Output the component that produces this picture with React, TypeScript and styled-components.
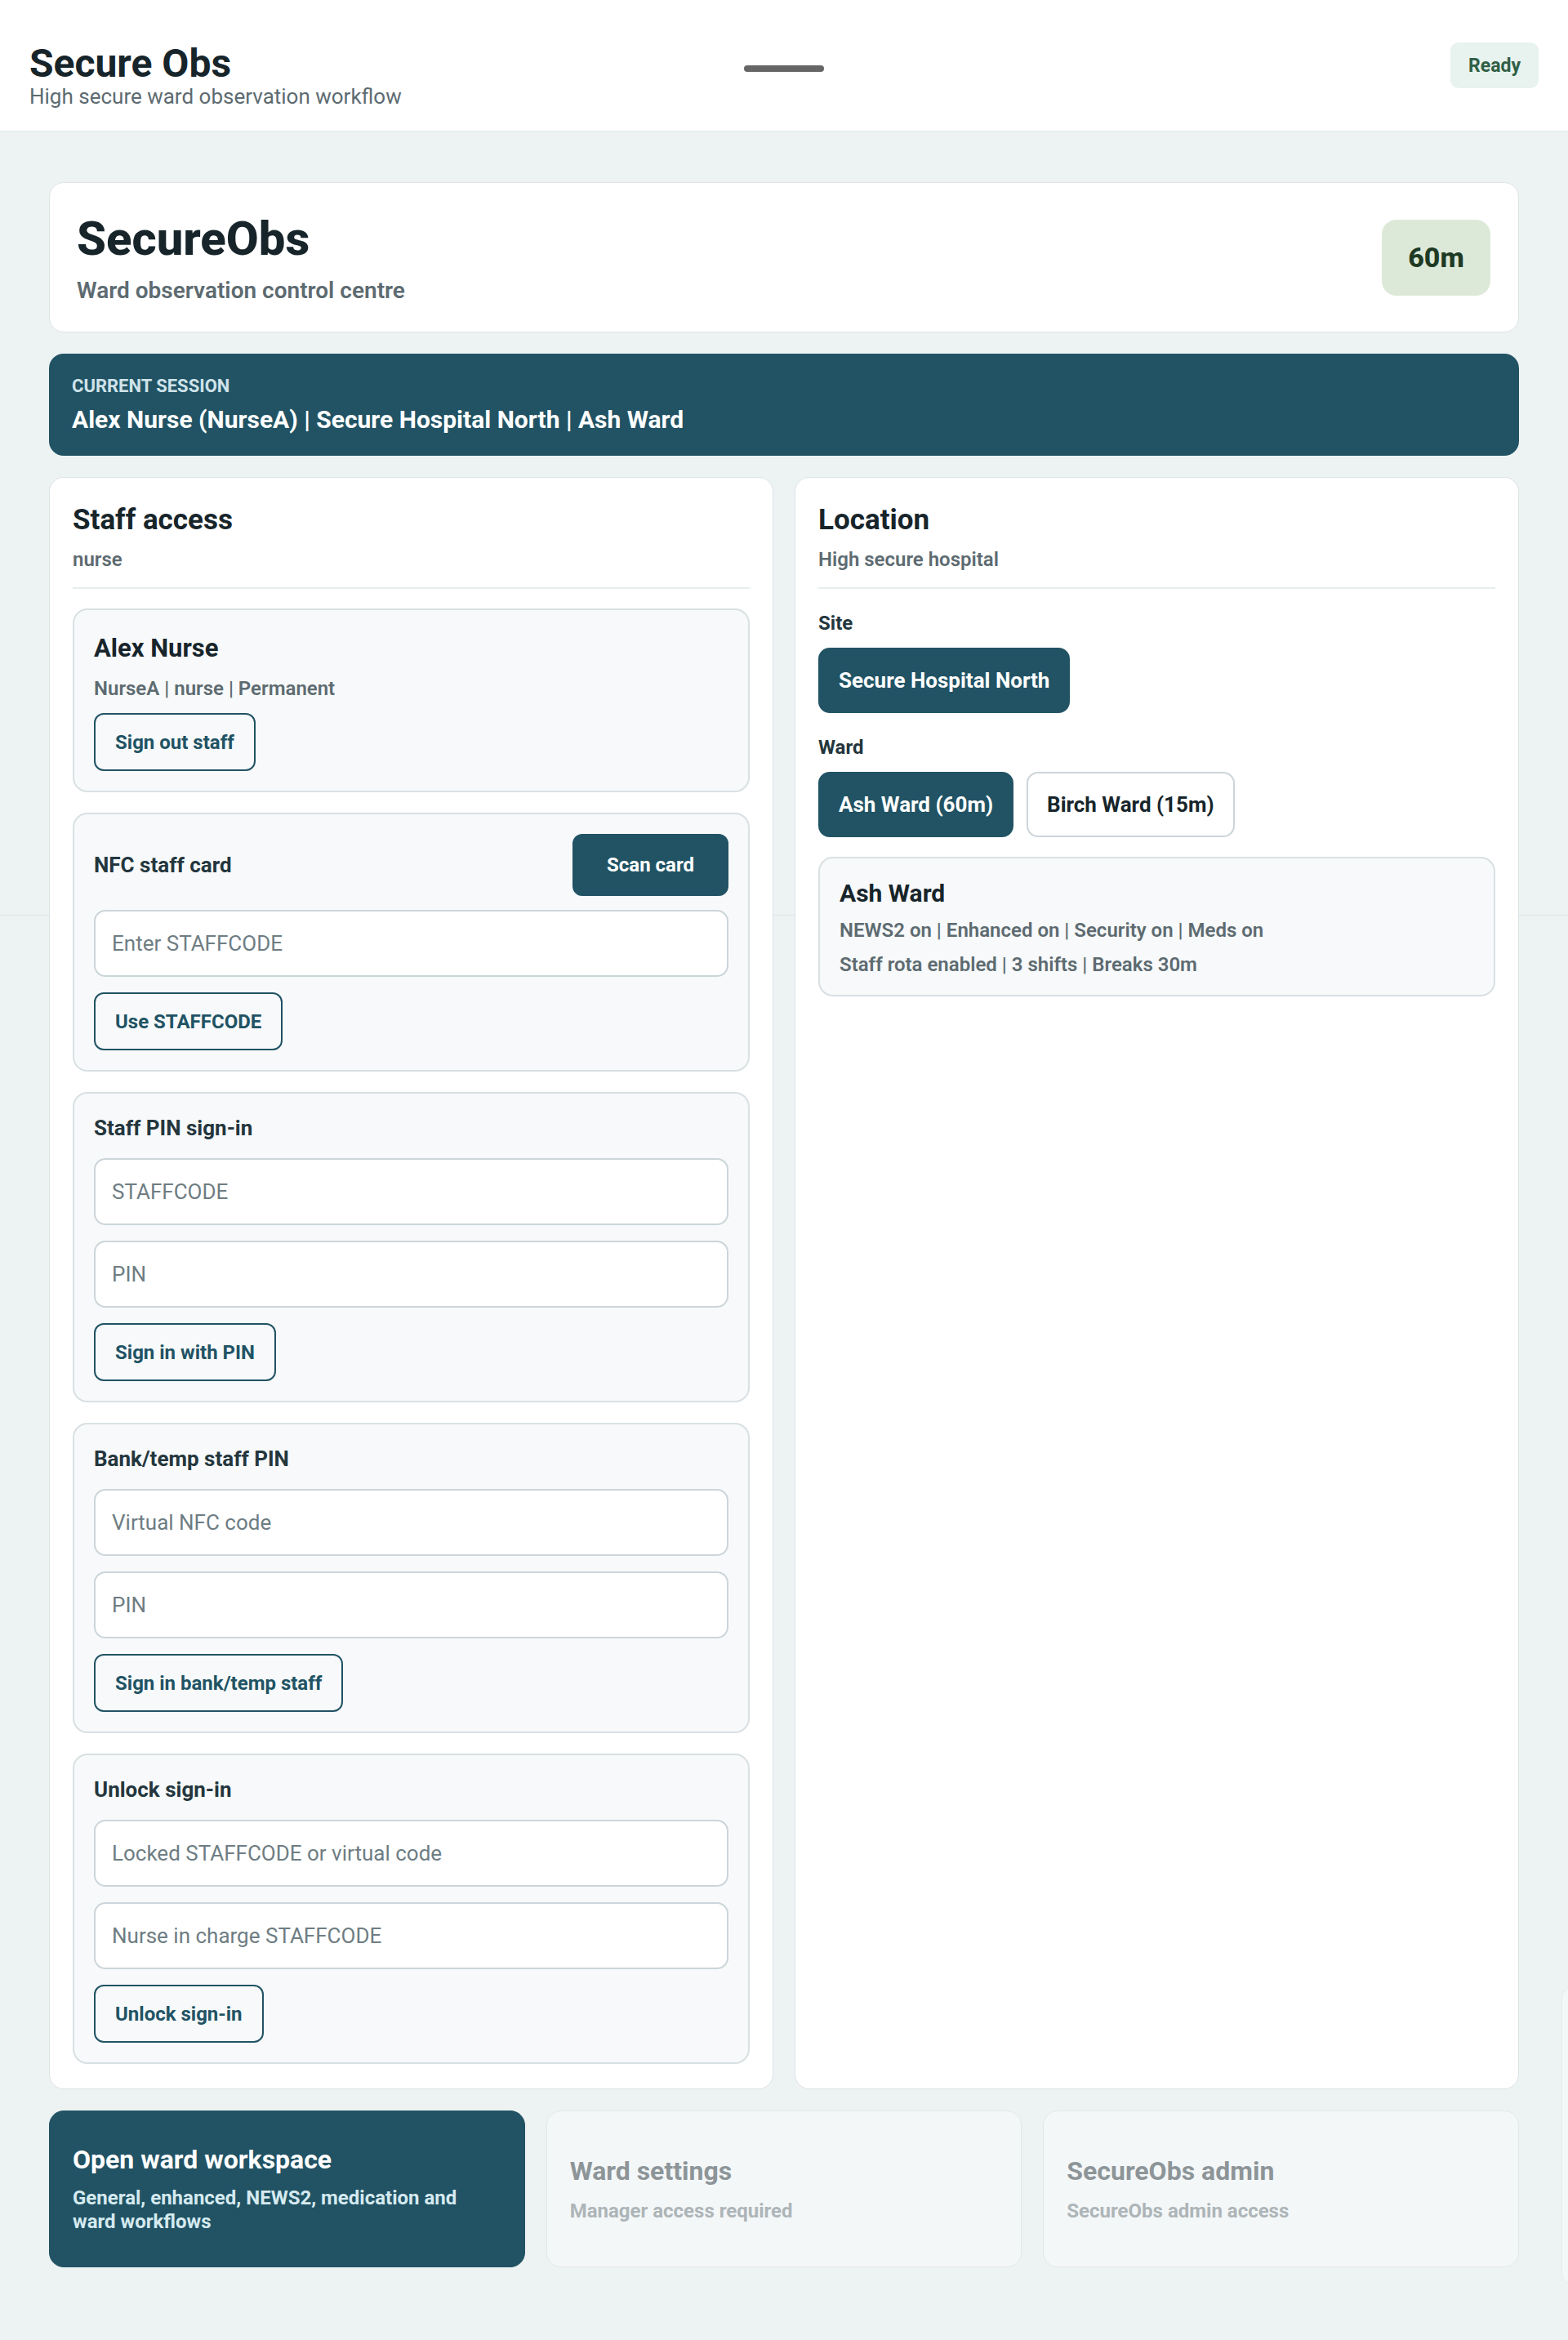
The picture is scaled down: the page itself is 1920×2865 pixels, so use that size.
import styled, { createGlobalStyle } from "styled-components";

const TEAL = "#215364";
const INK = "#17252b";
const MUTED = "#5d6b71";

const GlobalStyle = createGlobalStyle`
  * { box-sizing: border-box; }
  body {
    margin: 0;
    font-family: Roboto, "Noto Sans", Arial, sans-serif;
    color: ${INK};
    background: #edf3f3;
  }
  input, button { font-family: inherit; }
`;

const Page = styled.div`
  position: relative;
  min-height: 2865px;
  overflow: hidden;
  background: linear-gradient(#dde3e5, #dde3e5) 0 1120px / 100% 1px no-repeat,
    #edf3f3;
`;

const Header = styled.header`
  height: 161px;
  background: #fff;
  border-bottom: 1px solid #e1e7e9;
  display: grid;
  grid-template-columns: 1fr auto 1fr;
  align-items: center;
  padding: 0 36px;
`;

const Brand = styled.div`
  display: flex;
  flex-direction: column;
  padding-top: 24px;
`;

const BrandTitle = styled.h1`
  margin: 0;
  font-size: 48px;
  line-height: 52px;
  font-weight: 700;
  color: ${INK};
`;

const BrandSub = styled.div`
  font-size: 26px;
  line-height: 28px;
  color: ${MUTED};
`;

const Grabber = styled.div`
  width: 98px;
  height: 8px;
  border-radius: 4px;
  background: #666;
  margin-top: 7px;
`;

const Status = styled.div`
  justify-self: end;
  width: 108px;
  height: 56px;
  border-radius: 10px;
  background: #e8f2ee;
  color: #2f5f45;
  font-size: 23px;
  font-weight: 700;
  display: flex;
  align-items: center;
  justify-content: center;
`;

const Main = styled.main`
  padding: 62px 60px 90px;
  display: flex;
  flex-direction: column;
  gap: 26px;
`;

const Hero = styled.section`
  background: #fff;
  border: 1px solid #dde3e6;
  border-radius: 18px;
  padding: 24px 34px 24px 33px;
  display: flex;
  align-items: center;
  justify-content: space-between;
  height: 184px;
`;

const HeroTitle = styled.h2`
  margin: 0;
  font-size: 58px;
  line-height: 66px;
  font-weight: 800;
  color: ${INK};
`;

const HeroSub = styled.div`
  margin-top: 14px;
  font-size: 28px;
  font-weight: 600;
  color: ${MUTED};
`;

const IntervalBadge = styled.div`
  width: 133px;
  height: 93px;
  border-radius: 18px;
  background: #dde9d8;
  color: #1f3a24;
  font-size: 34px;
  font-weight: 800;
  display: flex;
  align-items: center;
  justify-content: center;
`;

const Session = styled.section`
  background: ${TEAL};
  border-radius: 18px;
  padding: 28px 28px 22px;
  height: 125px;
  color: #fff;
`;

const SessionLabel = styled.div`
  font-size: 22px;
  font-weight: 700;
  color: #cfe3ea;
  text-transform: uppercase;
  line-height: 24px;
`;

const SessionText = styled.div`
  margin-top: 10px;
  font-size: 30px;
  font-weight: 700;
  line-height: 38px;
`;

const Columns = styled.div`
  display: grid;
  grid-template-columns: 1fr 1fr;
  gap: 26px;
  align-items: stretch;
`;

const Panel = styled.section`
  background: #fff;
  border: 1px solid #dde3e6;
  border-radius: 18px;
  padding: 30px 28px 30px;
  display: flex;
  flex-direction: column;
`;

const PanelTitle = styled.h3`
  margin: 0;
  font-size: 35px;
  line-height: 44px;
  font-weight: 700;
  color: ${INK};
`;

const PanelSub = styled.div`
  margin-top: 10px;
  font-size: 24px;
  line-height: 32px;
  font-weight: 600;
  color: ${MUTED};
`;

const Divider = styled.hr`
  border: 0;
  border-top: 2px solid #e8edee;
  margin: 18px 0 24px;
`;

const Stack = styled.div`
  display: flex;
  flex-direction: column;
  gap: 25px;
`;

const Box = styled.div`
  background: #f7f9fa;
  border: 2px solid #d9e0e3;
  border-radius: 18px;
  padding: 24px;
  display: flex;
  flex-direction: column;
  align-items: flex-start;
  gap: 19px;
`;

const BoxHead = styled.div`
  align-self: stretch;
  display: flex;
  align-items: center;
  justify-content: space-between;
  margin-bottom: -2px;
`;

const PersonName = styled.div`
  font-size: 31px;
  line-height: 38px;
  font-weight: 700;
  color: ${INK};
  margin-top: 4px;
`;

const Meta = styled.div`
  font-size: 24px;
  line-height: 30px;
  font-weight: 600;
  color: ${MUTED};
  margin: -4px 0 -4px;
`;

const BoxTitle = styled.div`
  font-size: 26px;
  line-height: 36px;
  font-weight: 700;
  color: #24363d;
`;

const Input = styled.input`
  align-self: stretch;
  height: 82px;
  border: 2px solid #ccd5d9;
  border-radius: 14px;
  background: #fff;
  padding: 0 20px;
  font-size: 26px;
  color: ${INK};
  outline: none;
  &::placeholder {
    color: #6e7d83;
  }
`;

const Button = styled.button<{ $filled?: boolean; $muted?: boolean }>`
  height: ${(p) => (p.$filled ? "76px" : "71px")};
  padding: 0 ${(p) => (p.$filled ? "40px" : "24px")};
  border-radius: 12px;
  border: 2px solid ${(p) => (p.$muted ? "#cdd5d8" : TEAL)};
  background: ${(p) => (p.$filled ? TEAL : p.$muted ? "#fff" : "transparent")};
  color: ${(p) => (p.$filled ? "#fff" : p.$muted ? INK : TEAL)};
  font-size: 24px;
  font-weight: 700;
  cursor: pointer;
`;

const Choice = styled(Button)`
  height: 80px;
  padding: 0 23px;
  font-size: 26px;
  border-radius: 14px;
`;

const FieldLabel = styled.div`
  font-size: 24px;
  line-height: 32px;
  font-weight: 700;
  color: #24363d;
  margin: 2px 0 14px;
`;

const ChoiceRow = styled.div`
  display: flex;
  gap: 16px;
  margin-bottom: 24px;
`;

const WardInfo = styled.div`
  background: #f7f9fa;
  border: 2px solid #d9e0e3;
  border-radius: 18px;
  padding: 25px 24px 16px;
`;

const WardName = styled.div`
  font-size: 30px;
  line-height: 36px;
  font-weight: 700;
  color: ${INK};
  margin-bottom: 6px;
`;

const WardLine = styled.div`
  font-size: 24px;
  line-height: 42px;
  font-weight: 600;
  color: ${MUTED};
`;

const Actions = styled.div`
  display: grid;
  grid-template-columns: repeat(3, 1fr);
  gap: 26px;
`;

const ActionCard = styled.div<{ $active?: boolean }>`
  height: 192px;
  border-radius: 18px;
  padding: 28px;
  display: flex;
  flex-direction: column;
  justify-content: center;
  background: ${(p) => (p.$active ? TEAL : "#f4f7f8")};
  border: 1px solid ${(p) => (p.$active ? TEAL : "#e2e7e9")};
`;

const ActionTitle = styled.div<{ $active?: boolean }>`
  font-size: 32px;
  line-height: 38px;
  font-weight: 700;
  color: ${(p) => (p.$active ? "#fff" : "#8d9598")};
`;

const ActionSub = styled.div<{ $active?: boolean }>`
  margin-top: ${(p) => (p.$active ? "14px" : "16px")};
  font-size: 24px;
  line-height: 29px;
  font-weight: 700;
  color: ${(p) => (p.$active ? "#d5eaf0" : "#adb5b8")};
`;

const OffscreenDrawer = styled.div`
  position: absolute;
  left: 1912px;
  top: 2433px;
  width: 40px;
  height: 364px;
  background: #f4f7f8;
  border: 1px solid #e6ebec;
  border-radius: 14px;
`;

function LoginBox({
  title,
  fields,
  action,
}: {
  title: string;
  fields: string[];
  action: string;
}) {
  return (
    <Box>
      <BoxTitle>{title}</BoxTitle>
      {fields.map((f) => (
        <Input key={f} placeholder={f} />
      ))}
      <Button>{action}</Button>
    </Box>
  );
}

export default function App() {
  return (
    <Page>
      <GlobalStyle />
      <Header>
        <Brand>
          <BrandTitle>Secure Obs</BrandTitle>
          <BrandSub>High secure ward observation workflow</BrandSub>
        </Brand>
        <Grabber />
        <Status>Ready</Status>
      </Header>

      <Main>
        <Hero>
          <div>
            <HeroTitle>SecureObs</HeroTitle>
            <HeroSub>Ward observation control centre</HeroSub>
          </div>
          <IntervalBadge>60m</IntervalBadge>
        </Hero>

        <Session>
          <SessionLabel>Current session</SessionLabel>
          <SessionText>
            Alex Nurse (NurseA) | Secure Hospital North | Ash Ward
          </SessionText>
        </Session>

        <Columns>
          <Panel>
            <PanelTitle>Staff access</PanelTitle>
            <PanelSub>nurse</PanelSub>
            <Divider />
            <Stack>
              <Box>
                <PersonName>Alex Nurse</PersonName>
                <Meta>NurseA | nurse | Permanent</Meta>
                <Button>Sign out staff</Button>
              </Box>

              <Box>
                <BoxHead>
                  <BoxTitle>NFC staff card</BoxTitle>
                  <Button $filled>Scan card</Button>
                </BoxHead>
                <Input placeholder="Enter STAFFCODE" />
                <Button>Use STAFFCODE</Button>
              </Box>

              <LoginBox
                title="Staff PIN sign-in"
                fields={["STAFFCODE", "PIN"]}
                action="Sign in with PIN"
              />
              <LoginBox
                title="Bank/temp staff PIN"
                fields={["Virtual NFC code", "PIN"]}
                action="Sign in bank/temp staff"
              />
              <LoginBox
                title="Unlock sign-in"
                fields={[
                  "Locked STAFFCODE or virtual code",
                  "Nurse in charge STAFFCODE",
                ]}
                action="Unlock sign-in"
              />
            </Stack>
          </Panel>

          <Panel>
            <PanelTitle>Location</PanelTitle>
            <PanelSub>High secure hospital</PanelSub>
            <Divider />
            <FieldLabel>Site</FieldLabel>
            <ChoiceRow>
              <Choice $filled>Secure Hospital North</Choice>
            </ChoiceRow>
            <FieldLabel>Ward</FieldLabel>
            <ChoiceRow>
              <Choice $filled>Ash Ward (60m)</Choice>
              <Choice $muted>Birch Ward (15m)</Choice>
            </ChoiceRow>
            <WardInfo>
              <WardName>Ash Ward</WardName>
              <WardLine>
                NEWS2 on | Enhanced on | Security on | Meds on
              </WardLine>
              <WardLine>Staff rota enabled | 3 shifts | Breaks 30m</WardLine>
            </WardInfo>
          </Panel>
        </Columns>

        <Actions>
          <ActionCard $active>
            <ActionTitle $active>Open ward workspace</ActionTitle>
            <ActionSub $active>
              General, enhanced, NEWS2, medication and ward workflows
            </ActionSub>
          </ActionCard>
          <ActionCard>
            <ActionTitle>Ward settings</ActionTitle>
            <ActionSub>Manager access required</ActionSub>
          </ActionCard>
          <ActionCard>
            <ActionTitle>SecureObs admin</ActionTitle>
            <ActionSub>SecureObs admin access</ActionSub>
          </ActionCard>
        </Actions>
      </Main>
      <OffscreenDrawer />
    </Page>
  );
}
